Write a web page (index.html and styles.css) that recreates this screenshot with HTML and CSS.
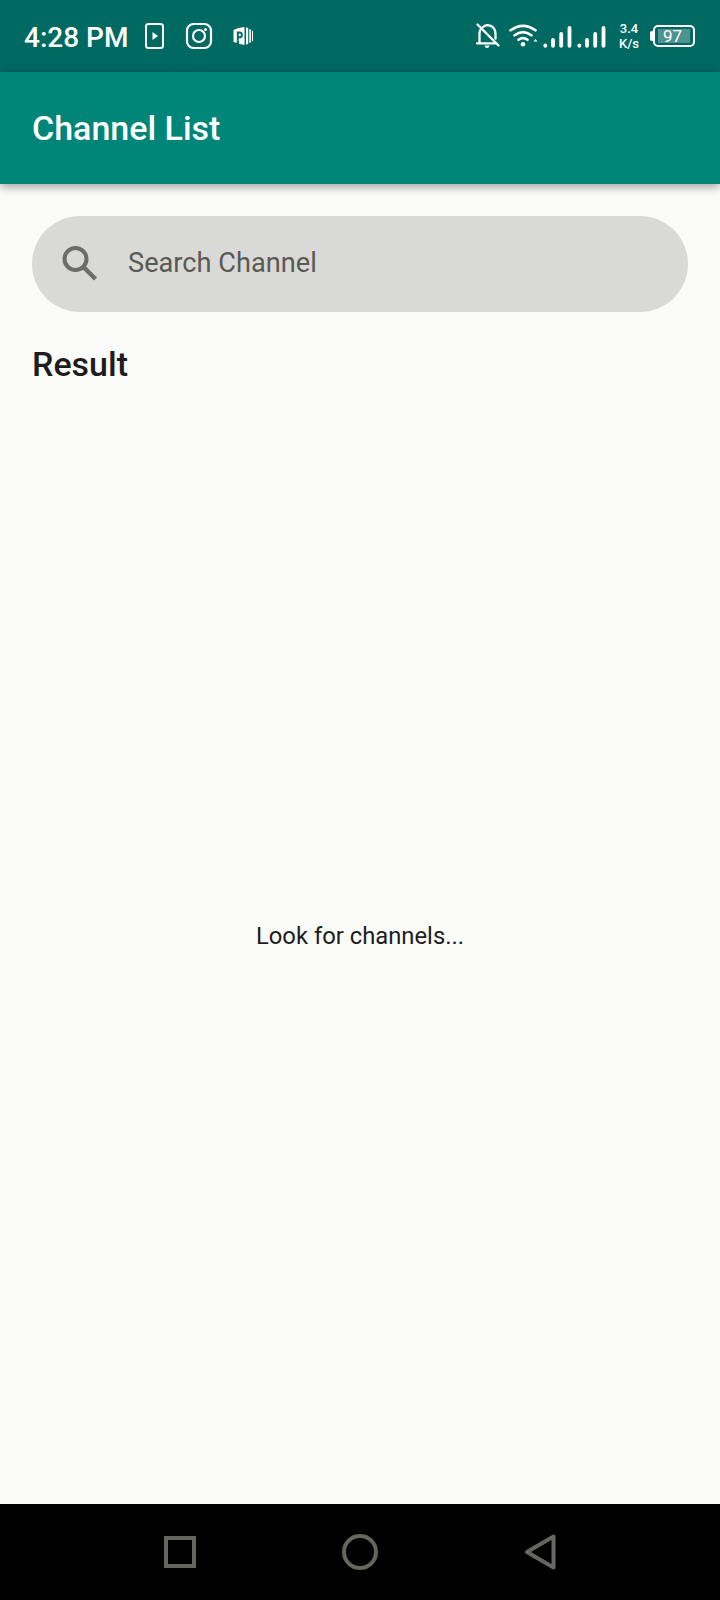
FILE: index.html
```html
<!DOCTYPE html>
<html lang="en">
<head>
<meta charset="utf-8">
<title>Channel List</title>
<link rel="stylesheet" href="styles.css">
</head>
<body>
<div class="phone">
  <div class="status">
    <span class="time">4:28 PM</span>
    <svg class="notices" width="110" height="28" viewBox="0 0 110 28" fill="none" stroke="#fff" stroke-width="2">
      <rect x="1" y="2" width="17" height="24" rx="2.5"/>
      <path d="M7.500 10v8l5.500-4z" fill="#fff" stroke="none"/>
      <rect x="42" y="2" width="24" height="24" rx="6.500" stroke-width="2.200"/>
      <circle cx="54" cy="14" r="6" stroke-width="2.200"/>
      <circle cx="60.500" cy="7.500" r="1.500" fill="#fff" stroke="none"/>
      <path d="M88.500 8Q93 5.500 99.500 5v18l-5.500-1.200v-3.300h-2.200V21l-3.300-1z" fill="#fff" stroke="none"/>
      <path d="M101 5.500l2.200.5v16l-2.200.5zM104.300 7l1.600.5v13l-1.600.5zM107 8.500l1 .5v10l-1 .5z" fill="#fff" stroke="none"/>
      <path d="M92.800 18.500v-8h1.700a2.400 2.400 0 0 1 0 4.800h-1.700" stroke="#006961" stroke-width="1.900"/>
    </svg>
    <svg class="signals" width="132" height="28" viewBox="0 0 132 28" fill="none" stroke="#fff" stroke-width="2.300" stroke-linecap="round">
      <path d="M2.500 2.500l21 21M2 21.300h18.500M4.500 20V11.500q0-2 .8-3.500M8 5Q10 3.200 12.500 3.200q7.500.5 8 8.500v5"/>
      <path d="M9.500 23.500h5q-.5 2.500-2.500 2.500T9.500 23.500z" fill="#fff" stroke="none"/>
      <g transform="translate(0 .8)">
        <path d="M35.500 7.500q12.500-9 25 0M39.500 12.500q8.500-6.500 17 0M43.500 17q4.500-3.500 9 0" stroke-width="2.600"/>
        <circle cx="48" cy="21.500" r="2.300" fill="#fff" stroke="none"/>
        <path d="M58.500 18.800l2-2.500 2 2.500z" fill="#fff" stroke="none"/>
      </g>
      <g stroke-width="3.800"><path d="M70.300 23.800v-.5M78 23.800V18M86.200 23.800V12M94.500 23.800V6M104.300 23.800v-.5M112 23.800V18M120.200 23.800V12M128.500 23.800V6"/></g>
    </svg>
    <span class="speed"><span>3.4</span><span>K/s</span></span>
    <div class="battery"><span class="charge">97</span></div>
  </div>
  <header class="appbar"><h1 class="title">Channel List</h1></header>
  <main class="content">
    <div class="search">
      <svg class="lens" width="36" height="36" viewBox="0 0 36 36" fill="none" stroke="#6c6c6a" stroke-width="4">
        <circle cx="13.500" cy="13" r="11"/>
        <path d="M22 21.500l11.500 11.500" stroke-width="4.500"/>
      </svg>
      <span class="hint">Search Channel</span>
    </div>
    <h2 class="result">Result</h2>
    <div class="empty">Look for channels...</div>
  </main>
  <nav class="nav">
    <svg width="36" height="36" viewBox="0 0 36 36"><path d="M4 4h28v28H4z"/></svg>
    <svg width="36" height="36" viewBox="0 0 36 36"><circle cx="18" cy="18" r="16"/></svg>
    <svg width="36" height="36" viewBox="0 0 36 36"><path d="M31.500 2.500v31L5 18z" stroke-linejoin="round"/></svg>
  </nav>
</div>
</body>
</html>
```
FILE: styles.css
```css
* { box-sizing: border-box; }
body { margin: 0; font-family: Roboto, "Liberation Sans", sans-serif; }
.phone { width: 720px; height: 1600px; display: flex; flex-direction: column; background: #fbfbfa; overflow: hidden; }
.status { height: 72px; flex: none; display: flex; align-items: center; padding-left: 24px; background: #006961; color: #fff; }
.time { width: 121px; font-size: 28px; font-weight: 500; line-height: 32px; padding-top: 4px; white-space: nowrap; }
.signals { margin-left: 220px; }
.speed { width: 24px; margin-left: 10px; display: flex; flex-direction: column; align-items: center; font-size: 13px; font-weight: 500; line-height: 15px; }
.battery { position: relative; width: 42px; height: 22px; margin-left: 12px; padding: 2px 3px; border: 2px solid #fff; border-radius: 5px; }
.battery::before { content: ""; position: absolute; left: -5px; top: 4px; width: 3px; height: 10px; border-radius: 2px 0 0 2px; background: #fff; }
.charge { display: block; height: 14px; background: #4f9390; font-size: 17px; line-height: 15px; padding-right: 3px; text-align: center; }
.appbar { height: 112px; flex: none; display: flex; align-items: center; padding-left: 32px; background: #008579; color: #fff; box-shadow: 0 3px 9px rgba(0,0,0,.36); }
.title { margin: 0; font-size: 34px; font-weight: 500; line-height: 40px; }
.content { flex: 1; display: flex; flex-direction: column; padding: 32px 32px 0; }
.search { height: 96px; flex: none; display: flex; align-items: center; padding-left: 30px; border-radius: 48px; background: #d9d9d7; }
.hint { margin-left: 30px; padding-bottom: 2px; font-size: 27.2px; line-height: 32px; color: #595955; }
.result { margin: 32px 0 0; font-size: 34px; font-weight: 500; line-height: 40px; color: #1d1d1b; }
.empty { flex: 1; display: flex; align-items: center; justify-content: center; padding-bottom: 16px; font-size: 23.8px; color: #1d1d1b; }
.nav { height: 96px; flex: none; display: flex; justify-content: space-between; align-items: center; padding: 0 162px; background: #000; }
.nav svg { fill: none; stroke: #666660; stroke-width: 4; }
```
